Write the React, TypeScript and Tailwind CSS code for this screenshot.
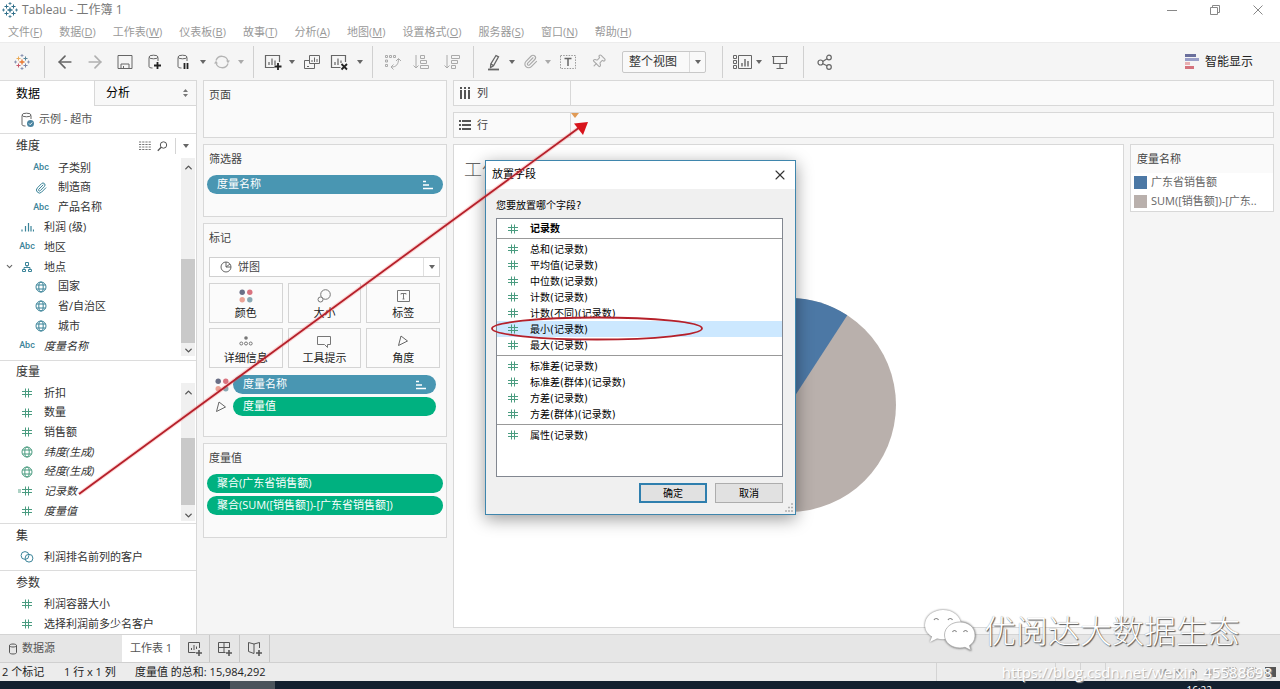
import React, { useState } from 'react';
import { ArrowLeft, ArrowRight, ChevronDown, ChevronUp, Paperclip, Pin, X } from 'lucide-react';

type FieldIcon = 'abc' | 'clip' | 'bins' | 'tree' | 'globe' | 'hash' | 'calcHash' | 'set';

interface Field {
  name: string;
  icon: FieldIcon;
  child?: boolean;
  open?: boolean;
  italic?: boolean;
}

const menus = [
  ['文件', 'F'],
  ['数据', 'D'],
  ['工作表', 'W'],
  ['仪表板', 'B'],
  ['故事', 'T'],
  ['分析', 'A'],
  ['地图', 'M'],
  ['设置格式', 'O'],
  ['服务器', 'S'],
  ['窗口', 'N'],
  ['帮助', 'H'],
];

const dimensions: Field[] = [
  { name: '子类别', icon: 'abc', child: true },
  { name: '制造商', icon: 'clip', child: true },
  { name: '产品名称', icon: 'abc', child: true },
  { name: '利润 (级)', icon: 'bins' },
  { name: '地区', icon: 'abc' },
  { name: '地点', icon: 'tree', open: true },
  { name: '国家', icon: 'globe', child: true },
  { name: '省/自治区', icon: 'globe', child: true },
  { name: '城市', icon: 'globe', child: true },
  { name: '度量名称', icon: 'abc', italic: true },
];

const measures: Field[] = [
  { name: '折扣', icon: 'hash' },
  { name: '数量', icon: 'hash' },
  { name: '销售额', icon: 'hash' },
  { name: '纬度(生成)', icon: 'globe', italic: true },
  { name: '经度(生成)', icon: 'globe', italic: true },
  { name: '记录数', icon: 'calcHash', italic: true },
  { name: '度量值', icon: 'hash', italic: true },
];

const sets: Field[] = [{ name: '利润排名前列的客户', icon: 'set' }];

const parameters: Field[] = [
  { name: '利润容器大小', icon: 'hash' },
  { name: '选择利润前多少名客户', icon: 'hash' },
];

const aggregationGroups = [
  ['总和(记录数)', '平均值(记录数)', '中位数(记录数)', '计数(记录数)', '计数(不同)(记录数)', '最小(记录数)', '最大(记录数)'],
  ['标准差(记录数)', '标准差(群体)(记录数)', '方差(记录数)', '方差(群体)(记录数)'],
  ['属性(记录数)'],
];

/* ---------- icons ---------- */

function Glyph({ w = 16, h = 16, className = '', children }: { w?: number; h?: number; className?: string; children: React.ReactNode }) {
  return (
    <svg width={w} height={h} viewBox={`0 0 ${w} ${h}`} fill="none" stroke="currentColor" className={`shrink-0 ${className}`} aria-hidden="true">
      {children}
    </svg>
  );
}

function Caret({ className = 'text-[#666]' }: { className?: string }) {
  return (
    <Glyph w={6} h={4} className={className}>
      <path d="M0 0h6L3 4z" fill="currentColor" stroke="none" />
    </Glyph>
  );
}

function HashIcon() {
  return (
    <Glyph w={10} h={10} className="text-[#4a9c80]">
      <path d="M3.5 0.5v9M6.5 0.5v9M0 3.5h10M0 6.5h10" />
    </Glyph>
  );
}

function GlobeIcon() {
  return (
    <Glyph w={12} h={12}>
      <circle cx="6" cy="6" r="5" />
      <ellipse cx="6" cy="6" rx="2.2" ry="5" />
      <path d="M1.5 4h9M1.5 8h9" />
    </Glyph>
  );
}

function ColorDots() {
  return (
    <Glyph w={14} h={14}>
      <g stroke="none">
        <circle cx="3.2" cy="3.2" r="2.7" fill="#6a6f86" />
        <circle cx="10.8" cy="3.2" r="2.7" fill="#d9737f" />
        <circle cx="3.2" cy="10.8" r="2.7" fill="#eba396" />
        <circle cx="10.8" cy="10.8" r="2.7" fill="#8aa9b4" />
      </g>
    </Glyph>
  );
}

function AngleIcon() {
  return (
    <Glyph w={12} h={12} className="text-[#666]">
      <path d="M4 1l6.500 5L1.500 10.500z" />
    </Glyph>
  );
}

function SortIcon() {
  return (
    <Glyph w={10} h={10} className="text-white">
      <path d="M0 1.500h3M0 5h6M0 8.500h10" strokeWidth="1.6" />
    </Glyph>
  );
}

function CylinderIcon({ children }: { children?: React.ReactNode }) {
  return (
    <Glyph className="text-[#666]">
      <path d="M2 3.500v9c0 1 1.500 1.500 3.500 1.500M11 3.500v3.500" />
      <ellipse cx="6.500" cy="3" rx="4.500" ry="1.800" />
      {children}
    </Glyph>
  );
}

function TableauMark({ mono = false }: { mono?: boolean }) {
  const c = mono
    ? ['#2f6f8a', '#2f6f8a', '#2f6f8a', '#2f6f8a', '#2f6f8a']
    : ['#e8762d', '#c9586a', '#5b879b', '#ebac59', '#7c86a8'];
  return (
    <Glyph>
      <path d="M8 5.500v5M5.500 8h5" stroke={c[0]} strokeWidth="1.300" />
      <path d="M4.500 2.500v4M2.500 4.500h4" stroke={c[3]} />
      <path d="M11.500 2.500v4M9.500 4.500h4" stroke={c[2]} />
      <path d="M4.500 9.500v4M2.500 11.500h4" stroke={c[1]} />
      <path d="M11.500 9.500v4M9.500 11.500h4" stroke={c[4]} />
      <path d="M8 0v3M6.500 1.500h3M8 13v3M6.500 14.500h3M0 8h3M1.500 6.500v3M13 8h3M14.500 6.500v3" stroke={c[4]} strokeWidth="0.800" />
    </Glyph>
  );
}

function FieldGlyph({ icon }: { icon: FieldIcon }) {
  switch (icon) {
    case 'abc':
      return <span className="font-[Roboto,sans-serif] text-[9px] font-medium">Abc</span>;
    case 'clip':
      return <Paperclip size={12} strokeWidth={2} />;
    case 'bins':
      return (
        <Glyph w={13} h={10}>
          <path d="M1 7.500v2M4.500 4v5.500M7.500 1v8.500M10 4v5.500M12.500 7.500v2" strokeWidth="1.200" />
        </Glyph>
      );
    case 'tree':
      return (
        <Glyph w={12} h={12}>
          <path d="M4.500 1.500h3v3h-3zM1.500 8.500h3v2h-3zM7.500 8.500h3v2h-3zM6 4.500v2M3 8.500v-2h6v2" />
        </Glyph>
      );
    case 'globe':
      return <GlobeIcon />;
    case 'calcHash':
      return (
        <span className="-ml-1 flex items-center">
          <Glyph w={4} h={10} className="text-[#4a9c80]">
            <path d="M0 4h3M0 6h3" strokeWidth="0.900" />
          </Glyph>
          <HashIcon />
        </span>
      );
    case 'set':
      return (
        <Glyph w={14} h={12}>
          <circle cx="5" cy="4.500" r="3.900" />
          <circle cx="9" cy="7.200" r="3.900" />
        </Glyph>
      );
    default:
      return <HashIcon />;
  }
}

/* ---------- left data pane ---------- */

function FieldList({ fields, className, green = false }: { fields: Field[]; className: string; green?: boolean }) {
  return (
    <ul className={`grid flex-1 auto-rows-fr ${className}`}>
      {fields.map((f) => (
        <li key={f.name} className="flex min-h-0 items-center whitespace-nowrap">
          <span className={`flex shrink-0 justify-end ${f.child ? 'w-7' : 'w-3.5'}`}>
            {f.open && <ChevronDown size={9} strokeWidth={3} className="text-[#666]" />}
          </span>
          <span className={`flex w-[26px] shrink-0 justify-center ${green ? 'text-[#4a9c80]' : 'text-[#3b8499]'}`}>
            <FieldGlyph icon={f.icon} />
          </span>
          <span className={`ml-1 ${f.italic ? 'italic' : ''}`}>{f.name}</span>
        </li>
      ))}
    </ul>
  );
}

function ScrollTrack({ children }: { children: React.ReactNode }) {
  return (
    <div className="mr-px flex w-3.5 flex-col items-center bg-[#f0f0f0] text-[#555]">
      <ChevronUp size={11} strokeWidth={3} className="my-1 shrink-0" />
      {children}
      <ChevronDown size={11} strokeWidth={3} className="mt-auto shrink-0" />
    </div>
  );
}

function DataPane() {
  return (
    <aside className="flex w-[197px] shrink-0 flex-col border-r border-[#d8d8d8] bg-white text-[11px] text-[#333]">
      <div className="flex h-[26px] text-[12px]">
        <button className="w-[94px] border-t border-[#dcdcdc] pl-4 text-left text-black">数据</button>
        <button className="flex flex-1 items-center justify-between border border-r-0 border-[#d8d8d8] bg-[#f8f8f8] pr-2 pl-[11px] text-black">
          分析
          <Glyph w={5} h={8} className="text-[#777]">
            <path d="M0 3l2.500-3L5 3zM0 5h5L2.500 8z" fill="currentColor" stroke="none" />
          </Glyph>
        </button>
      </div>
      <div className="flex h-7 items-center gap-[3px] border-b border-[#dcdcdc] pl-5 text-[#555]">
        <CylinderIcon>
          <circle cx="10.500" cy="11.500" r="3.500" fill="#4a84a0" stroke="none" />
          <path d="M9 11.500l1.200 1.200 2-2.200" stroke="#fff" />
        </CylinderIcon>
        示例 - 超市
      </div>

      <section>
        <div className="flex h-6 items-center">
          <h2 className="flex-1 pl-4 text-[12px]">维度</h2>
          <button aria-label="查看数据">
            <Glyph w={12} h={10} className="text-[#777]">
              <path d="M0 1h12M0 3.500h12M0 6h12M0 8.500h12" strokeDasharray="2.200 1" />
            </Glyph>
          </button>
          <button aria-label="查找字段" className="ml-1.5">
            <Glyph w={11} h={11} className="text-[#555]">
              <circle cx="6.500" cy="4" r="3.200" />
              <path d="M4.200 6.300L0.800 9.700" strokeWidth="1.300" />
            </Glyph>
          </button>
          <span className="ml-[7px] h-4 w-px bg-[#d4d4d4]" />
          <button aria-label="维度菜单" className="px-[7px]">
            <Caret />
          </button>
        </div>
        <div className="flex pb-1">
          <FieldList fields={dimensions} className="h-[198px]" />
          <ScrollTrack>
            <div className="mt-[82px] h-[84px] w-full bg-[#c9c9c9]" />
          </ScrollTrack>
        </div>
      </section>

      <section className="border-t border-[#dcdcdc]">
        <h2 className="h-[22px] pl-4 text-[12px] leading-[22px]">度量</h2>
        <div className="flex pb-0.5">
          <FieldList fields={measures} className="h-[138px]" green />
          <ScrollTrack>
            <div className="mt-9 h-[67px] w-full bg-[#c9c9c9]" />
          </ScrollTrack>
        </div>
      </section>

      <section className="border-t border-[#dcdcdc] pb-[3px]">
        <h2 className="h-[23px] pl-4 text-[12px] leading-[23px]">集</h2>
        <FieldList fields={sets} className="h-5" />
      </section>

      <section className="border-t border-[#dcdcdc]">
        <h2 className="h-[23px] pl-4 text-[12px] leading-[23px]">参数</h2>
        <FieldList fields={parameters} className="h-10" />
      </section>
    </aside>
  );
}

/* ---------- cards ---------- */

function Card({ title, className = '', children }: { title: string; className?: string; children?: React.ReactNode }) {
  return (
    <section className={`border border-[#d8d8d8] bg-[#fafafa] px-[3px] ${className}`}>
      <h3 className="mb-[3px] h-[27px] pl-0.5 leading-[27px]">{title}</h3>
      {children}
    </section>
  );
}

function Pill({ label, blue = false }: { label: string; blue?: boolean }) {
  return (
    <button
      className={`flex h-[19px] w-full items-center justify-between rounded-full pr-2.5 pl-[10px] whitespace-nowrap text-white ${blue ? 'bg-[#4996b2]' : 'bg-[#00b180]'}`}
    >
      {label}
      {blue && <SortIcon />}
    </button>
  );
}

function MarkButton({ label, children }: { label: string; children: React.ReactNode }) {
  return (
    <button className="flex h-10 flex-col items-center border border-[#d4d4d4] bg-[#fbfbfb] pt-1 text-[#222]">
      <span className="flex h-4 items-center text-[#777]">{children}</span>
      <span className="leading-[18px]">{label}</span>
    </button>
  );
}

function Cards() {
  return (
    <div className="flex w-[244px] shrink-0 flex-col gap-1.5">
      <Card title="页面" className="h-[58px]" />
      <Card title="筛选器" className="h-[73px]">
        <Pill label="度量名称" blue />
      </Card>
      <Card title="标记" className="pb-5">
        <div className="pr-[3px] pl-0.5">
          <div className="mt-1.5 flex h-5 items-center border border-[#d0d0d0] bg-white">
            <Glyph w={12} h={12} className="ml-2.5 text-[#666]">
              <circle cx="6" cy="6" r="5" />
              <path d="M6 1v5l4-3M6 6h5" />
            </Glyph>
            <select aria-label="标记类型" className="h-full flex-1 appearance-none bg-transparent pl-1.5 outline-none">
              <option>饼图</option>
            </select>
            <span className="pointer-events-none flex h-full w-4 items-center justify-center border-l border-[#e0e0e0]">
              <Caret />
            </span>
          </div>
          <div className="mt-1.5 grid grid-cols-3 gap-[5px]">
            <MarkButton label="颜色">
              <ColorDots />
            </MarkButton>
            <MarkButton label="大小">
              <Glyph w={14} h={14}>
                <circle cx="8.500" cy="5.500" r="4.800" />
                <circle cx="3.500" cy="10.500" r="2.500" fill="#fbfbfb" />
              </Glyph>
            </MarkButton>
            <MarkButton label="标签">
              <Glyph w={13} h={12}>
                <path d="M0.500 0.500h12v11h-12zM4 4.500V3.500h5v1M6.500 3.500v5.500M5.500 9h2" />
              </Glyph>
            </MarkButton>
            <MarkButton label="详细信息">
              <Glyph w={14} h={10}>
                <circle cx="7" cy="2" r="1.800" fill="currentColor" stroke="none" />
                <circle cx="2.300" cy="7.500" r="1.500" />
                <circle cx="7" cy="7.500" r="1.500" />
                <circle cx="11.700" cy="7.500" r="1.500" />
              </Glyph>
            </MarkButton>
            <MarkButton label="工具提示">
              <Glyph w={14} h={13}>
                <path d="M0.500 1.500h13v8h-3v3l-3-3h-7z" />
              </Glyph>
            </MarkButton>
            <MarkButton label="角度">
              <AngleIcon />
            </MarkButton>
          </div>
          <div className="mt-[7px] grid grid-cols-[24px_1fr] items-center gap-y-[3px] pr-1">
            <span className="pl-1.5">
              <ColorDots />
            </span>
            <Pill label="度量名称" blue />
            <span className="pl-1.5">
              <AngleIcon />
            </span>
            <Pill label="度量值" />
          </div>
        </div>
      </Card>
      <Card title="度量值" className="h-[95px]">
        <div className="flex flex-col gap-[3px]">
          <Pill label="聚合(广东省销售额)" />
          <Pill label="聚合(SUM([销售额])-[广东省销售额])" />
        </div>
      </Card>
    </div>
  );
}

/* ---------- toolbar ---------- */

function Tool({ label, className = 'w-[26px]', children }: { label: string; className?: string; children: React.ReactNode }) {
  return (
    <button aria-label={label} title={label} className={`flex h-6 shrink-0 items-center justify-center text-[#666] ${className}`}>
      {children}
    </button>
  );
}

function Divider() {
  return <span className="mx-1.5 h-8 w-px shrink-0 bg-[#d0d0d0]" />;
}

function Toolbar() {
  return (
    <div className="flex h-[38px] items-center border-t border-[#ececec] bg-[#f5f5f5]">
      <Tool label="开始页面" className="w-[38px] pl-1.5">
        <TableauMark />
      </Tool>
      <Divider />
      <Tool label="撤消" className="w-[28px]">
        <ArrowLeft size={20} strokeWidth={2} />
      </Tool>
      <Tool label="重做" className="w-8">
        <ArrowRight size={20} strokeWidth={2} className="text-[#b0b0b0]" />
      </Tool>
      <Tool label="保存" className="w-[28px]">
        <Glyph>
          <path d="M1 1.500h14v13H1zM4 14.500v-4.500h8v4.500M6.500 14v-2" />
        </Glyph>
      </Tool>
      <Tool label="新建数据源" className="w-8">
        <CylinderIcon>
          <path d="M10.500 8v7M7 11.500h7" stroke="#222" strokeWidth="1.800" />
        </CylinderIcon>
      </Tool>
      <Tool label="暂停自动更新">
        <CylinderIcon>
          <path d="M8.500 9v6M11.500 9v6" stroke="#222" strokeWidth="1.800" />
        </CylinderIcon>
      </Tool>
      <Tool label="更新选项" className="w-3">
        <Caret />
      </Tool>
      <Tool label="运行更新">
        <Glyph className="text-[#b4b4b4]">
          <path d="M2 6.500a6.200 6.200 0 0 1 12 1M14 9.500a6.200 6.200 0 0 1-12-1" strokeWidth="1.300" />
          <path d="M12 6.500h4l-2 2.800zM0 9.500h4L2 6.800z" fill="currentColor" stroke="none" />
        </Glyph>
      </Tool>
      <Tool label="运行选项" className="w-3">
        <Caret className="text-[#aaa]" />
      </Tool>
      <Divider />
      <Tool label="新建工作表">
        <Glyph w={18} h={18}>
          <path d="M15.500 9V2.500h-14v12h9M5 12V9M8 12V5.500M11 12V7.500" strokeWidth="1.200" />
          <path d="M14 10v7M10.500 13.500h7" stroke="#222" strokeWidth="1.800" />
        </Glyph>
      </Tool>
      <Tool label="新建选项" className="w-3">
        <Caret />
      </Tool>
      <Tool label="复制工作表">
        <Glyph w={17} h={16}>
          <path d="M6.500 1.500h10v8h-10zM6.500 6.500h-5v8h10v-5M9 8V6M11.500 8V3.500M14 8V5M4 12.500h2" />
        </Glyph>
      </Tool>
      <Tool label="清除工作表" className="w-[30px]">
        <Glyph w={18} h={18}>
          <path d="M15.500 9V2.500h-14v12h9M5 12V9M8 12V5.500M11 10V7.500" strokeWidth="1.200" />
          <path d="M11.500 11l5.500 5.500M17 11l-5.500 5.500" stroke="#222" strokeWidth="1.800" />
        </Glyph>
      </Tool>
      <Tool label="清除选项" className="w-3">
        <Caret />
      </Tool>
      <Divider />
      <Tool label="交换行和列">
        <Glyph w={17} h={16} className="text-[#aaa]">
          <path d="M1.500 1.500h2v2h-2zM5.500 1.500h2v2h-2zM9.500 1.500h2v2h-2zM1.500 6h2v2h-2zM1.500 10.500h2v2h-2zM14.500 5c0 5-2 8-7 8M12 7l2.500-2.500L17 7M9.500 10.500L7 13l2.500 2.500" />
        </Glyph>
      </Tool>
      <Tool label="升序排序" className="w-8">
        <Glyph w={17} h={16} className="text-[#aaa]">
          <path d="M3 1v13M0.500 11.500L3 14l2.500-2.500M7.500 1.500h4v3h-4zM7.500 6.500h6v3h-6zM7.500 11.500h8v3h-8z" />
        </Glyph>
      </Tool>
      <Tool label="降序排序" className="w-[30px]">
        <Glyph w={17} h={16} className="text-[#aaa]">
          <path d="M3 1v13M0.500 11.500L3 14l2.500-2.500M7.500 1.500h8v3h-8zM7.500 6.500h6v3h-6zM7.500 11.500h4v3h-4z" />
        </Glyph>
      </Tool>
      <Divider />
      <Tool label="突出显示" className="w-[28px]">
        <Glyph w={14} h={18}>
          <path d="M9 2.500l2.500 1.300-5 9-3 1.700.3-3.500zM4 11l2.500 1.500" strokeWidth="1.300" />
          <path d="M1 16.500h11" strokeWidth="1.800" />
        </Glyph>
      </Tool>
      <Tool label="突出显示选项" className="w-2">
        <Caret />
      </Tool>
      <Tool label="分组成员" className="w-[28px]">
        <Paperclip size={15} strokeWidth={1.8} className="text-[#aaa]" />
      </Tool>
      <Tool label="分组选项" className="w-2">
        <Caret className="text-[#aaa]" />
      </Tool>
      <Tool label="显示标记标签" className="w-8">
        <Glyph>
          <path d="M0.500 1.500h15v13h-15z" strokeDasharray="1.500 1.200" className="text-[#999]" stroke="currentColor" />
          <path d="M4.500 4.500h7M8 4.500v7.500" strokeWidth="1.500" />
        </Glyph>
      </Tool>
      <Tool label="固定轴" className="w-[28px]">
        <Pin size={15} strokeWidth={1.8} className="rotate-45 text-[#aaa]" />
      </Tool>
      <div className="mr-2.5 ml-2.5 flex h-[22px] w-[84px] shrink-0 items-center rounded-xs border border-[#c8c8c8] bg-[#f9f9f9]">
        <select aria-label="适合" className="h-full min-w-0 flex-1 appearance-none bg-transparent pl-1.5 text-[12px] text-[#333] outline-none">
          <option>整个视图</option>
        </select>
        <span className="pointer-events-none flex h-full w-4 items-center justify-center border-l border-[#dadada]">
          <Caret />
        </span>
      </div>
      <Divider />
      <Tool label="显示/隐藏卡">
        <Glyph w={19} h={16}>
          <path d="M0.500 1.500h3v3h-3zM0.500 6.500h3v3h-3zM0.500 11.500h3v3h-3zM5.500 1.500h13v13h-13z" />
          <path d="M9 12.500V9M12 12.500V5M15 12.500V7" strokeWidth="1.400" />
        </Glyph>
      </Tool>
      <Tool label="卡选项" className="w-2">
        <Caret />
      </Tool>
      <Tool label="演示模式" className="w-[34px]">
        <Glyph>
          <path d="M0 2.500h16M1.500 2.500v7h13v-7M8 9.500v5M4.500 14.500h7" strokeWidth="1.200" />
        </Glyph>
      </Tool>
      <Divider />
      <Tool label="共享" className="w-[30px]">
        <Glyph>
          <circle cx="3.500" cy="8.500" r="2.500" strokeWidth="1.200" />
          <circle cx="12" cy="3.500" r="2.300" strokeWidth="1.200" />
          <circle cx="12" cy="13" r="2.300" strokeWidth="1.200" />
          <path d="M5.800 7.500L10 4.800M5.800 9.800l4.200 2" strokeWidth="1.200" />
        </Glyph>
      </Tool>
      <button className="mr-[27px] ml-auto flex items-center gap-1.5 text-[12px] text-[#222]">
        <Glyph w={14} h={15}>
          <g stroke="none">
            <path d="M0 0h11v3H0z" fill="#6a6f9c" />
            <path d="M0 4h14v3H0z" fill="#9a9fc8" />
            <path d="M0 8h5v3H0z" fill="#e9b0b2" />
            <path d="M0 12h9v3H0z" fill="#d4727c" />
          </g>
        </Glyph>
        智能显示
      </button>
    </div>
  );
}

/* ---------- worksheet ---------- */

function Shelf({ label, icon, marker = false }: { label: string; icon: React.ReactNode; marker?: boolean }) {
  return (
    <div className="flex h-[26px] border border-[#d8d8d8] bg-[#fafafa]">
      <div className="flex w-[117px] items-center gap-1.5 border-r border-[#d8d8d8] pl-[5px]">
        {icon}
        {label}
      </div>
      {marker && (
        <Glyph w={8} h={5}>
          <path d="M0 0h8L4 5z" fill="#e09a55" stroke="none" />
        </Glyph>
      )}
    </div>
  );
}

function Worksheet() {
  return (
    <div className="flex min-w-0 flex-1 flex-col gap-1.5">
      <Shelf
        label="列"
        icon={
          <Glyph w={12} h={12} className="text-[#555]">
            <path d="M2 0v12M6 0v12M10 0v12" strokeWidth="2" strokeDasharray="2 1 9" />
          </Glyph>
        }
      />
      <Shelf
        label="行"
        marker
        icon={
          <Glyph w={12} h={12} className="text-[#555]">
            <path d="M0 2h12M0 6h12M0 10h12" strokeWidth="2" strokeDasharray="2 1 9" />
          </Glyph>
        }
      />
      <div className="flex flex-1 gap-1.5">
        <div className="flex min-w-0 flex-1 flex-col border border-[#d8d8d8] bg-white">
          <h1 className="h-[38px] pt-1.5 pl-2.5 text-[18px] leading-9 font-light text-[#666]">工作表 1</h1>
          <div className="flex flex-1 items-center justify-center">
            <svg width="214" height="214" viewBox="-107 -107 214 214" role="img" aria-label="饼图">
              <circle r="107" fill="#b9b0ac" />
              <path d="M0 0V-107A107 107 0 0 1 58.300 -89.700Z" fill="#4c78a5" />
            </svg>
          </div>
        </div>
        <section className="h-[68px] w-[144px] shrink-0 border border-[#d8d8d8] bg-white">
          <h3 className="h-7 bg-[#fafafa] pl-1.5 leading-7">度量名称</h3>
          <ul className="pl-[3px] text-[#666]">
            <li className="flex h-[19px] items-center gap-1 whitespace-nowrap">
              <span className="h-[13px] w-[13px] shrink-0 bg-[#4c78a5]" />
              广东省销售额
            </li>
            <li className="flex h-[19px] items-center gap-1 whitespace-nowrap">
              <span className="h-[13px] w-[13px] shrink-0 bg-[#b9b0ac]" />
              SUM([销售额])-[广东..
            </li>
          </ul>
        </section>
      </div>
    </div>
  );
}

/* ---------- dialog ---------- */

function DropFieldDialog() {
  const [selected, setSelected] = useState('最小(记录数)');

  return (
    <div
      role="dialog"
      aria-label="放置字段"
      className="absolute top-40 left-[485px] w-[311px] border border-[#3f86ad] bg-[#f0f0f0] font-['DejaVu_Sans','Noto_Sans_CJK_SC',sans-serif] text-[10px] text-black shadow-[0_4px_16px_rgba(0,0,0,0.4)]"
    >
      <div className="flex h-7 items-center justify-between bg-white pr-[7px] pl-1.5 text-[11px]">
        放置字段
        <button aria-label="关闭">
          <X size={16} strokeWidth={1.6} className="text-[#333]" />
        </button>
      </div>
      <div className="pt-[9px] pr-3 pl-2.5">
        <p className="mb-1 h-4 leading-4">您要放置哪个字段?</p>
        <div className="h-[259px] border border-[#828790] bg-white">
          <div className="flex h-5 items-center border-b border-[#999] pl-[11px] font-bold">
            <HashIcon />
            <span className="pl-3">记录数</span>
          </div>
          {aggregationGroups.map((group) => (
            <div key={group[0]} className="border-b border-[#999] py-0.5 last:border-b-0">
              {group.map((item) => (
                <button
                  key={item}
                  onClick={() => setSelected(item)}
                  className={`flex h-4 w-full items-center pl-[11px] ${item === selected ? 'bg-[#cce8ff]' : ''}`}
                >
                  <HashIcon />
                  <span className="pl-3">{item}</span>
                </button>
              ))}
            </div>
          ))}
        </div>
        <div className="mt-1.5 flex justify-end gap-2">
          <button className="h-5 w-[68px] border-2 border-[#2f7fae] bg-[#e1e1e1]">确定</button>
          <button className="h-5 w-[68px] border border-[#adadad] bg-[#e1e1e1]">取消</button>
        </div>
      </div>
      <div className="flex justify-end pr-0.5 pb-0.5">
        <Glyph w={9} h={9} className="text-[#b0b0b0]">
          <path d="M7 1h2M4 4.500h2M7 4.500h2M1 8h2M4 8h2M7 8h2" strokeWidth="1.600" />
        </Glyph>
      </div>
    </div>
  );
}

/* ---------- bottom bars ---------- */

function SheetTabs() {
  return (
    <div className="flex h-7 items-stretch border-t border-[#d4d4d4] bg-[#e6e6e6] text-[#555]">
      <button className="flex w-[122px] items-center gap-1 pl-2">
        <Glyph w={10} h={12}>
          <path d="M1.500 2.500v7c0 2 7 2 7 0v-7c0-2-7-2-7 0zM1.500 2.500c0 2 7 2 7 0" />
        </Glyph>
        数据源
      </button>
      <button className="w-[58px] bg-white whitespace-nowrap">工作表 1</button>
      {['新建工作表', '新建仪表板', '新建故事'].map((label, i) => (
        <button key={label} aria-label={label} className="flex w-[30px] items-center justify-center border-r border-[#c8c8c8]">
          <Glyph>
            {i === 0 && <path d="M12.500 7V1.500h-11v10h7M4.500 9V7M7 9V4M9.500 8V5.500" />}
            {i === 1 && <path d="M12.500 7V1.500h-11v10h7M7 1.500v10M1.500 6.500h11" />}
            {i === 2 && <path d="M7 3L1.500 1.500v9L7 12.500V3l5.500-1.500V7" />}
            <path d="M12 9v6M9 12h6" strokeWidth="1.600" />
          </Glyph>
        </button>
      ))}
    </div>
  );
}

function StatusBar() {
  return (
    <div className="flex h-[19px] items-center border-t border-[#d0d0d0] bg-[#ececec] text-[#222]">
      <span className="w-[62px] pl-0.5">2 个标记</span>
      <span className="w-[73px] pl-0.5">1 行 x 1 列</span>
      <span>度量值 的总和: 15,984,292</span>
      <div className="ml-auto flex h-full w-[344px] items-center border-l border-[#d4d4d4] text-[#999]">
        <span className="ml-[118px] h-full w-px bg-[#d4d4d4]" />
        <span className="ml-6 h-full w-px bg-[#d4d4d4]" />
        <span className="ml-6 h-full w-px bg-[#d4d4d4]" />
        <div className="ml-auto flex items-center gap-2 pr-1">
          <Glyph w={60} h={8}>
            <path d="M4 1v6M9 1L5 4l4 3zM23 1l-4 3 4 3zM36 1l4 3-4 3zM50 1l4 3-4 3zM55 1v6" fill="currentColor" />
          </Glyph>
          <Glyph w={12} h={10}>
            <path d="M1 1h10v8H1zM6 1v8M1 5h10" strokeDasharray="2 1" />
          </Glyph>
          <Glyph w={12} h={10}>
            <path d="M1 1h10v8H1zM4 1v8M8 1v8" strokeDasharray="2 1" />
          </Glyph>
          <Glyph w={11} h={10} className="text-[#555]">
            <path d="M0 0h11v10H0z" fill="currentColor" stroke="none" />
            <path d="M1 2h3v6H1" stroke="#eee" />
          </Glyph>
        </div>
      </div>
    </div>
  );
}

function Taskbar() {
  return (
    <div className="flex h-2 overflow-hidden bg-[#13202f]">
      <span className="ml-[230px] w-[45px] bg-[#4b545c]" />
      <span className="mr-[68px] ml-auto pt-[3px] text-[10px] leading-3 text-white">16:22</span>
    </div>
  );
}

/* ---------- overlays ---------- */

function Annotations() {
  return (
    <svg width="720" height="520" className="pointer-events-none absolute top-0 left-0" fill="none" aria-hidden="true">
      <path d="M79 494L580 127" stroke="#ff5a5a" strokeOpacity="0.250" strokeWidth="4" />
      <path d="M79 494L580 127" stroke="#b5202a" strokeWidth="1.800" />
      <path d="M588 122L574 123.500 583 135z" fill="#d8141c" />
      <ellipse cx="597" cy="328.500" rx="105" ry="11" stroke="#b5202a" strokeWidth="1.800" />
    </svg>
  );
}

function Watermark() {
  return (
    <div className="pointer-events-none absolute right-0 bottom-2 text-white">
      <div className="mr-10 mb-2.5 flex items-center justify-end gap-2">
        <svg width="52" height="44" viewBox="0 0 52 44" className="drop-shadow-[0_0_1px_rgba(0,0,0,0.6)]" aria-hidden="true">
          <path d="M19 1C9 1 1 7.500 1 16c0 5 2.500 9 7 11.500L6 33l7-3.500c2 .5 4 .8 6 .8 10 0 18-6 18-14.500S29 1 19 1z" fill="#fff" />
          <path d="M36 13c-8.500 0-15.500 5.500-15.500 13S27.500 39 36 39c1.800 0 3.500-.2 5-.7l6 3.200-1.500-5C49.500 34 51 30.500 51 26c0-7.500-6.500-13-15-13z" fill="#fff" stroke="#aaa" strokeWidth="0.800" />
          <path d="M10 11c1-2 3.500-2 4.500 0M24 11c1-2 3.500-2 4.500 0M28.500 23c1-2 3-2 4 0M39.500 23c1-2 3-2 4 0" fill="none" stroke="#888" strokeWidth="1.200" />
        </svg>
        <span className="text-[32px] leading-[44px] font-light whitespace-nowrap [text-shadow:1px_1px_1px_#555,0_0_1px_#888]">优阅达大数据生态</span>
      </div>
      <p className="mr-2 text-right text-[15px] leading-[18px] [text-shadow:1px_1px_1px_#aaa]">https://blog.csdn.net/weixin_45588698</p>
    </div>
  );
}

export default function App() {
  return (
    <div className="relative flex min-h-screen flex-col overflow-hidden bg-[#f5f5f5] font-['Open_Sans','Noto_Sans_CJK_SC',sans-serif] text-[11px] text-[#444]">
      <header className="flex h-5 items-center bg-white pl-0.5 text-[12px] text-[#777]">
        <TableauMark mono />
        <span className="flex-1 pl-1">Tableau - 工作簿 1</span>
        <div className="flex w-[130px] items-center text-[#888]">
          <button aria-label="最小化" className="flex w-[43px] justify-center">
            <Glyph w={10} h={10}>
              <path d="M0 5.500h10" />
            </Glyph>
          </button>
          <button aria-label="还原" className="flex w-[43px] justify-center">
            <Glyph w={10} h={10}>
              <path d="M0.500 2.500h7v7h-7zM2.500 2.500v-2h7v7h-2" />
            </Glyph>
          </button>
          <button aria-label="关闭窗口" className="flex w-[43px] justify-center">
            <Glyph w={10} h={10}>
              <path d="M0.500 0.500l9 9M9.500 0.500l-9 9" />
            </Glyph>
          </button>
        </div>
      </header>
      <nav className="flex h-[22px] items-center gap-[17px] bg-white pt-0.5 pl-2 whitespace-nowrap text-[#999]">
        {menus.map(([name, key]) => (
          <button key={key}>
            {name}(<u>{key}</u>)
          </button>
        ))}
      </nav>
      <Toolbar />
      <main className="flex flex-1">
        <DataPane />
        <div className="flex min-w-0 flex-1 gap-1.5 pr-1.5 pb-1.5 pl-1.5">
          <Cards />
          <Worksheet />
        </div>
      </main>
      <SheetTabs />
      <StatusBar />
      <Taskbar />
      <DropFieldDialog />
      <Annotations />
      <Watermark />
    </div>
  );
}
